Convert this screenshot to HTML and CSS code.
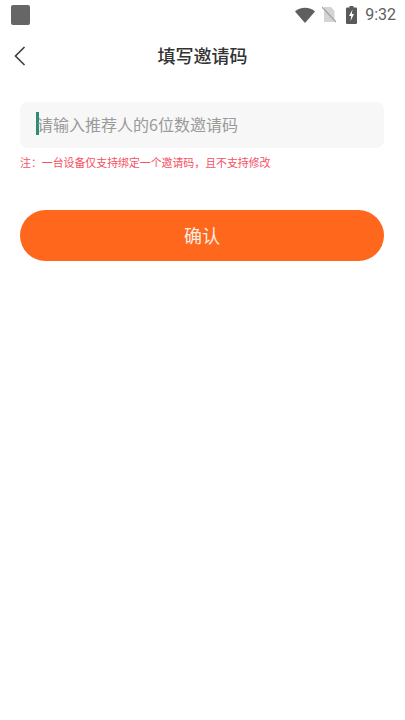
FILE: index.html
```html
<!DOCTYPE html>
<html lang="zh-CN">
<head>
<meta charset="utf-8">
<title>填写邀请码</title>
<link rel="stylesheet" href="styles.css">
</head>
<body>
<div class="status">
  <div class="status-square"></div>
  <div class="status-right">
    <svg class="wifi" width="20" height="16" viewBox="0 0 20 16"><path d="M0 4.500C2.600 2 6 .8 10 .8s7.400 1.200 10 3.700L10 16z" fill="#5f5f5f"/></svg>
    <svg class="sim" width="14" height="17" viewBox="0 0 14 17"><path d="M2 1h7l3.500 4v11H2z" fill="#d4d4d4"/><path d="M0 1l14 15" stroke="#a5a5a5" stroke-width="1.300"/></svg>
    <svg class="battery" width="11" height="18" viewBox="0 0 11 18"><path d="M3.500 0h4v1.500H10a1 1 0 0 1 1 1V17a1 1 0 0 1-1 1H1a1 1 0 0 1-1-1V2.500a1 1 0 0 1 1-1h2.500z" fill="#5a5a5a"/><path d="M6.500 3.500L3 10h2.200L4.500 15 8 8H5.800z" fill="#fff"/></svg>
    <span class="time">9:32</span>
  </div>
</div>
<header class="nav">
  <svg class="back" width="12" height="20" viewBox="0 0 12 20"><path d="M10.500 1L1.500 10l9 9" fill="none" stroke="#3a3a3a" stroke-width="1.600"/></svg>
  <h1 class="title">填写邀请码</h1>
</header>
<main class="content">
  <div class="field"><span class="caret"></span><span class="placeholder">请输入推荐人的6位数邀请码</span></div>
  <p class="note">注：一台设备仅支持绑定一个邀请码，且不支持修改</p>
  <button class="confirm" type="button">确认</button>
</main>
</body>
</html>
```
FILE: styles.css
```css
* { box-sizing: border-box; }
html, body { margin: 0; padding: 0; height: 100%; background: #fff; }
body { font-family: "Noto Sans CJK SC", "Roboto", sans-serif; width: 405px; height: 720px; overflow: hidden; }
.status { height: 29px; display: flex; align-items: center; justify-content: space-between; padding: 0 9px 0 11px; }
.status-square { width: 19px; height: 20px; background: #666; border-radius: 2px; }
.status-right { display: flex; align-items: center; }
.wifi { margin-right: 7px; }
.sim { margin-right: 10px; }
.battery { margin-right: 8px; }
.time { font-family: "Roboto", sans-serif; font-size: 16px; color: #5f5f5f; }
.nav { height: 55px; display: flex; align-items: center; justify-content: center; position: relative; padding-bottom: 4px; }
.back { position: absolute; left: 14px; top: 17px; }
.title { margin: 0; font-size: 18px; line-height: 26px; font-weight: 500; color: #333; }
.content { padding: 18px 21px 0 20px; }
.field { height: 46px; border-radius: 8px; background: #f7f7f7; display: flex; align-items: center; padding-left: 16px; padding-bottom: 3px; }
.caret { width: 3px; height: 23px; background: #2e8b74; margin-right: -2px; }
.placeholder { font-size: 16px; color: #9a9a9a; white-space: nowrap; }
.note { margin: 6px 0 0; font-size: 10.900px; line-height: 17px; color: #f6505f; white-space: nowrap; }
.confirm { display: block; width: 100%; height: 51px; margin-top: 39px; border: 0; border-radius: 26px; background: #ff671d; color: #fbeee5; font-family: inherit; font-size: 18px; padding: 0 0 2px; }
```
